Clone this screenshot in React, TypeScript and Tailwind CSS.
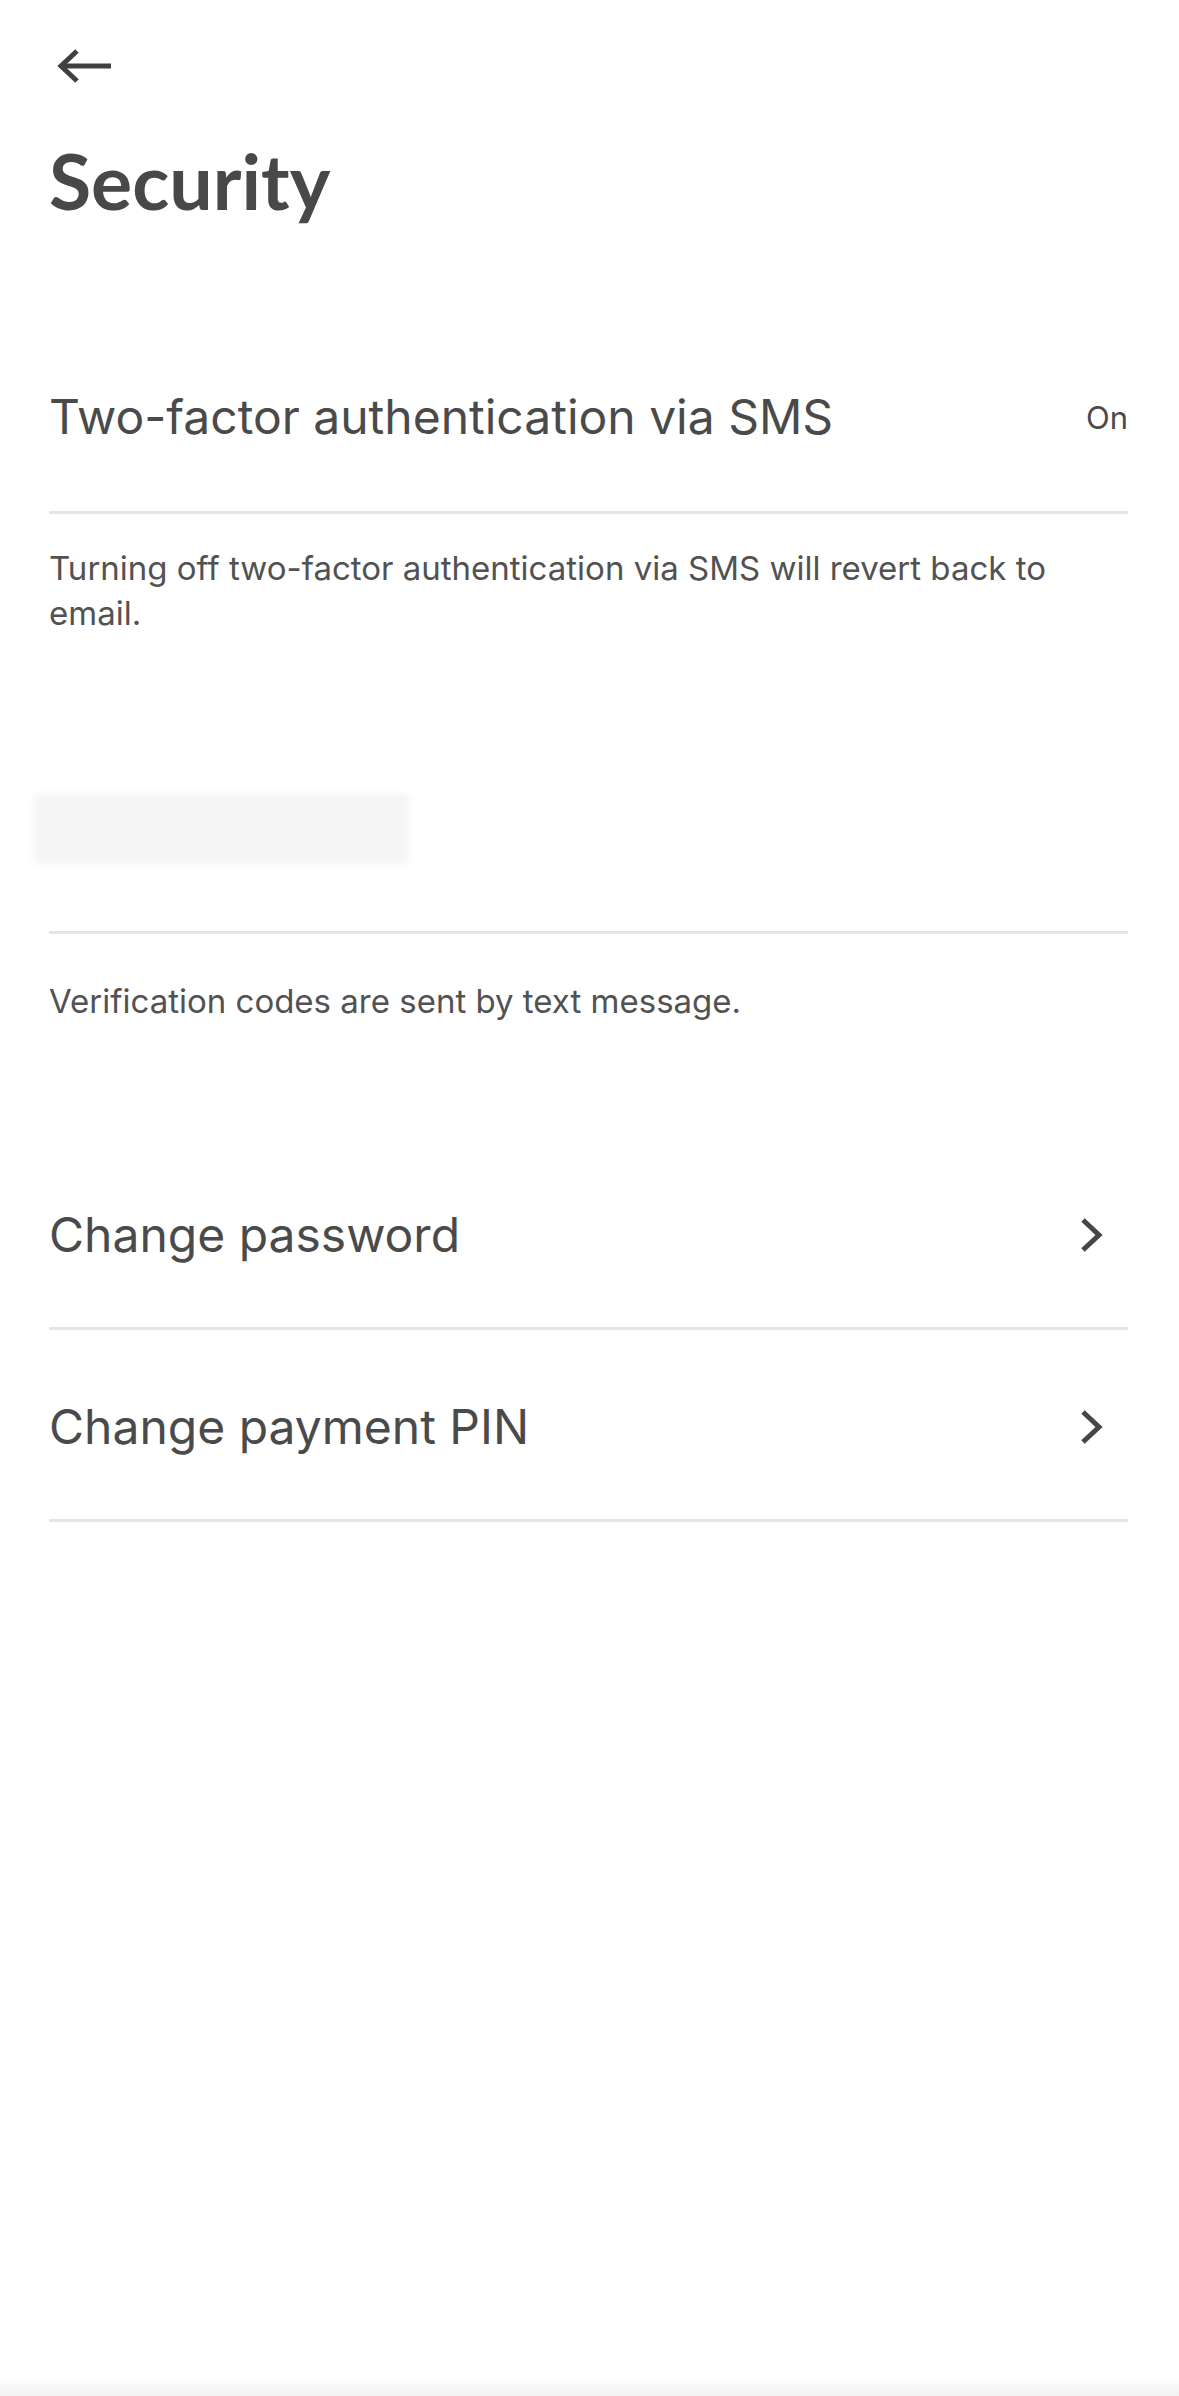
import React from "react";

const inter = { fontFamily: '"Inter", "Noto Sans", sans-serif' } as const;

function Chevron() {
  return (
    <svg width="24" height="34" viewBox="0 0 24 34" className="mr-[24px] shrink-0">
      <path d="M3 2 L19 17 L3 32" fill="none" stroke="#454545" strokeWidth="5" />
    </svg>
  );
}

function NavRow({ label }: { label: string }) {
  return (
    <div className="flex items-center justify-between pt-[73px] pb-[68px] border-b-[3px] border-[#e5e5e5]">
      <span className="text-[48px] leading-[48px] text-[#4a4a4a]" style={inter}>
        {label}
      </span>
      <Chevron />
    </div>
  );
}

export default function App() {
  return (
    <div className="flex min-h-[2396px] flex-col bg-white">
      <div className="flex-1 pl-[49px] pr-[51px]">
        <div className="pt-[48px]">
          <svg width="56" height="36" viewBox="0 0 56 36" className="ml-[7px] block">
            <path d="M5 18 H55" fill="none" stroke="#404040" strokeWidth="5" />
            <path d="M21 3 L5 18 L21 33" fill="none" stroke="#404040" strokeWidth="5" />
          </svg>
        </div>
        <h1
          className="mt-[58px] text-[77px] font-bold leading-[77px] text-[#484848]"
          style={{ fontFamily: '"Lato", "Noto Sans", sans-serif' }}
        >
          Security
        </h1>

        <div className="flex items-center justify-between pt-[172px] pb-[69px] border-b-[3px] border-[#e5e5e5]">
          <span className="text-[48px] leading-[48px] text-[#4a4a4a]" style={inter}>
            Two-factor authentication via SMS
          </span>
          <span className="mt-[3px] text-[31px] leading-[48px] text-[#4a4a4a]" style={inter}>
            On
          </span>
        </div>

        <p className="mt-[32px] text-[33px] leading-[45px] text-[#525252]" style={inter}>
          Turning off two-factor authentication via SMS will revert back to email.
        </p>

        <div className="ml-[-15px] mt-[158px] h-[70px] w-[375px] rounded-[4px] bg-[#f5f5f5] blur-[3px]" />

        <div className="mt-[67px] border-b-[3px] border-[#e5e5e5]" />

        <p className="mt-[45px] text-[33px] leading-[45px] text-[#525252]" style={inter}>
          Verification codes are sent by text message.
        </p>

        <div className="mt-[114px]">
          <NavRow label="Change password" />
          <NavRow label="Change payment PIN" />
        </div>
      </div>
      <div className="h-[18px] bg-gradient-to-b from-white to-[#f1f1f1]" />
    </div>
  );
}
